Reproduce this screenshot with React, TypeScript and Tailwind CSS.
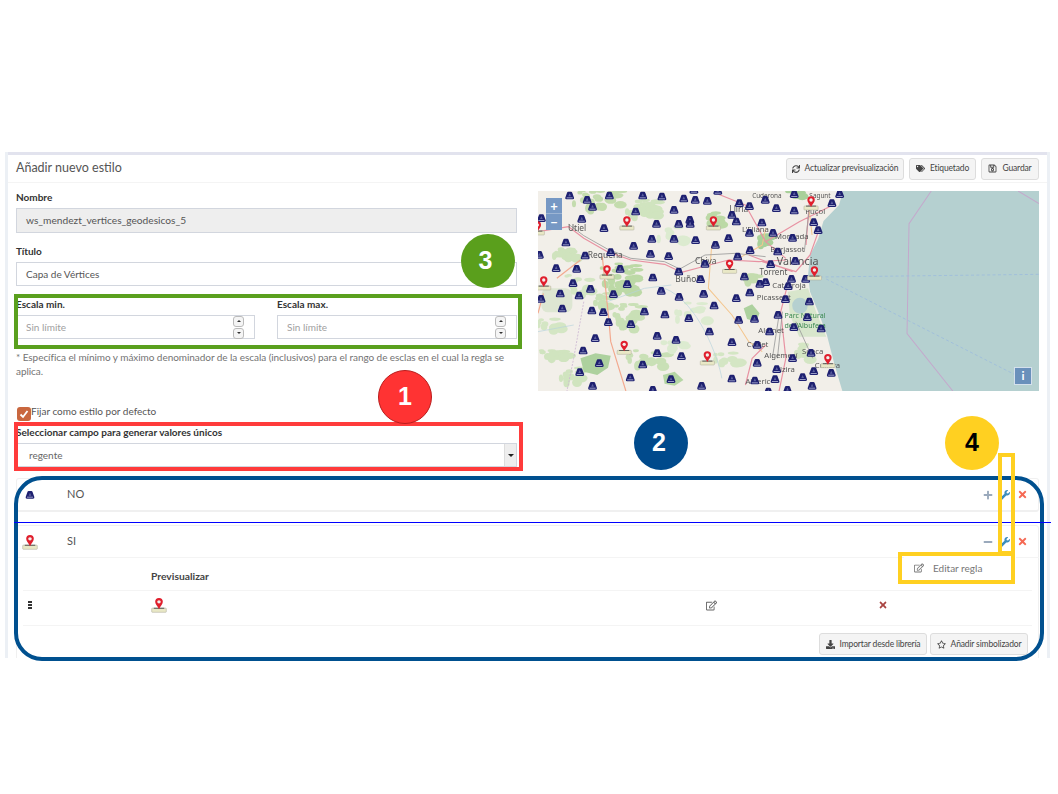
import { FaDownload, FaMinus, FaPlus, FaRegEdit, FaRegSave, FaRegStar, FaSync, FaTags, FaTimes, FaWrench } from "react-icons/fa";
import type { ReactNode } from "react";

const font = { fontFamily: "Lato, 'Noto Sans', sans-serif" };

// marker positions, in the map's own units (3 units = 1px)
const bluePoints = [
  [118, 152], [170, 165], [236, 152], [335, 152], [392, 155], [457, 161], [491, 165], [527, 168], [622, 175], [652, 184],
  [699, 165], [785, 148], [920, 148], [897, 175], [186, 186], [314, 200], [428, 195], [732, 190], [785, 197], [600, 210],
  [34, 220], [154, 222], [475, 225], [476, 237], [613, 230], [689, 233], [843, 232], [220, 250], [376, 237], [442, 237],
  [856, 256], [652, 264], [722, 264], [780, 279], [362, 282], [428, 282], [492, 286], [590, 280], [107, 293], [308, 303],
  [551, 300], [736, 320], [654, 316], [240, 322], [358, 327], [412, 334], [164, 332], [28, 330], [617, 335], [715, 358],
  [788, 348], [520, 357], [78, 370], [139, 372], [268, 372], [442, 380], [365, 398], [777, 402], [819, 402], [507, 403],
  [637, 395], [128, 415], [289, 418], [700, 412], [683, 417], [767, 424], [180, 432], [90, 446], [146, 452], [248, 448],
  [390, 438], [516, 447], [653, 443], [443, 456], [613, 460], [759, 463], [33, 462], [830, 470], [547, 482], [96, 491],
  [184, 497], [218, 502], [340, 500], [401, 509], [472, 520], [737, 510], [824, 517], [620, 525], [667, 522], [233, 532],
  [300, 538], [784, 547], [865, 551], [533, 560], [712, 560], [194, 580], [378, 573], [434, 585], [600, 592], [675, 600],
  [158, 617], [378, 625], [450, 634], [780, 640], [835, 624], [206, 655], [335, 659], [675, 654], [733, 673], [148, 682],
  [298, 698], [600, 701], [843, 679], [895, 684], [810, 697], [728, 703], [668, 707], [419, 703], [510, 723], [186, 723],
  [838, 723], [365, 735], [708, 740], [765, 735], [487, 135], [558, 138],
];

const redPoints = [
  [835, 175], [288, 235], [545, 235], [593, 365], [229, 382], [845, 385], [41, 415], [280, 608], [527, 640], [885, 648], [22, 250],
];

// wooded areas: cx, cy, rx, ry, how many patches, colour
const woods = [
  [205, 165, 75, 32, 30, "#c4dcae"], [335, 190, 50, 32, 24, "#d0e4bf"], [110, 322, 42, 20, 14, "#cfe3bd"],
  [265, 400, 55, 45, 34, "#bcd9a6"], [290, 515, 42, 40, 24, "#c9e0b6"], [215, 470, 25, 25, 12, "#c9e0b6"],
  [350, 640, 60, 25, 20, "#c9e0b6"], [70, 630, 50, 14, 16, "#d0e4bf"], [130, 690, 40, 24, 14, "#d0e4bf"],
  [545, 225, 25, 28, 10, "#bcd9a6"], [695, 285, 20, 20, 10, "#a9d09a"], [655, 400, 22, 12, 8, "#c4dcae"],
  [480, 500, 50, 30, 10, "#dcebd0"], [585, 640, 40, 20, 10, "#d4e6c4"], [790, 150, 28, 12, 10, "#a9d09a"],
  [810, 620, 25, 30, 10, "#d4e6c4"], [60, 540, 40, 18, 12, "#d4e6c4"], [420, 260, 40, 30, 8, "#dcebd0"],
  [150, 420, 50, 30, 12, "#d4e6c4"], [420, 600, 50, 20, 8, "#dcebd0"],
] as const;

const patches = woods.flatMap(([cx, cy, rx, ry, n, fill], w) =>
  Array.from({ length: n }, (_, i) => {
    const a = Math.sin(w * 12.9 + i * 78.2) * 43758.5;
    const b = Math.sin(w * 39.3 + i * 11.1) * 24634.6;
    const u = a - Math.floor(a);
    const v = b - Math.floor(b);
    return {
      cx: cx + (u * 2 - 1) * rx,
      cy: cy + (v * 2 - 1) * ry,
      rx: 6 + u * 14,
      ry: 4 + v * 10,
      fill,
    };
  })
);

const Blue = ({ x, y }: { x: number; y: number }) => (
  <g transform={`translate(${x} ${y})`}>
    <path d="M-4,-12 H4 Q7,-12 8,-8 L13,6 Q14,11 9,11 H-9 Q-14,11 -13,6 L-8,-8 Q-7,-12 -4,-12 Z" fill="#1e2070" />
    <path d="M0,-7 L4,2 H-4 Z" fill="#5c609f" />
    <rect x="-9" y="5" width="18" height="3" fill="#9a9dc6" />
  </g>
);

const Red = ({ x, y }: { x: number; y: number }) => (
  <g transform={`translate(${x} ${y})`}>
    <rect x="-21" y="8" width="42" height="12" rx="2" fill="#e9e8c6" stroke="#aaa996" strokeWidth="1.5" />
    <rect x="-15" y="7" width="30" height="2.5" fill="#444" />
    <path d="M0,11 C-4,2 -11,-3 -11,-10 A11,11 0 0 1 11,-10 C11,-3 4,2 0,11 Z" fill="#e01f2d" />
    <circle cx="0" cy="-10" r="5" fill="#f1f1ef" />
  </g>
);

const BlueIcon = () => (
  <svg width="10" height="10" viewBox="-15 -13 30 26">
    <Blue x={0} y={0} />
  </svg>
);

const RedIcon = () => (
  <svg width="16" height="16" viewBox="-23 -23 46 44">
    <Red x={0} y={0} />
  </svg>
);

const MapLabel = ({ x, y, size = 25, fill = "#555", children }: { x: number; y: number; size?: number; fill?: string; children: ReactNode }) => (
  <text x={x} y={y} fontSize={size} fill={fill} fontFamily="'Noto Sans', sans-serif">{children}</text>
);

const MapPreview = () => (
  <div className="relative w-[501px] h-[200px] mt-2 overflow-hidden">
    <svg width="501" height="200" viewBox="24 138 1488 600" preserveAspectRatio="none" className="block blur-[0.3px]">
      <rect x="0" y="100" width="1600" height="700" fill="#f2efe9" />
      <rect x="34" y="430" width="92" height="72" rx="20" fill="#dde6d2" />
      {patches.map((p, i) => (
        <ellipse key={i} cx={p.cx} cy={p.cy} rx={p.rx} ry={p.ry} fill={p.fill} />
      ))}
      <path d="M150,640 L195,625 L240,632 L232,668 L200,690 L160,680 Z" fill="#add19e" />
      <path d="M635,490 L660,478 L682,505 L672,530 L645,522 Z" fill="#add19e" />
      <path d="M395,690 L430,680 L456,705 L430,722 L400,716 Z" fill="#b5d6a4" />
      <path d="M766,440 L826,430 L850,500 L880,575 L800,575 L772,510 Z" fill="#d8e6cc" />
      <ellipse cx="802" cy="482" rx="23" ry="24" fill="#b5d0d0" />
      <path d="M932,130 L918,180 L872,228 L856,282 L832,330 L826,392 L832,440 L856,500 L882,570 L905,660 L930,745 H1600 V130 Z" fill="#b5d0d0" />
      <path d="M1192,138 L1126,236 L1120,566 L1256,738 M1450,138 L1512,176" fill="none" stroke="#c4a8cc" strokeWidth="3" />
      <path d="M862,396 L1512,388 M880,402 L1462,700" fill="none" stroke="#9dbcdc" strokeWidth="2.5" strokeDasharray="9 7" />
      <g fill="none" strokeLinejoin="round">
        <path d="M540,300 L530,430 L600,510 L650,590 L690,620 M830,200 L838,270 M700,250 L690,300 L620,340" stroke="#f4c68e" strokeWidth="3" />
        <path d="M215,335 L235,530 L240,590 L285,738 M24,505 L40,445 M150,345 L80,400" stroke="#f2a98f" strokeWidth="3.5" />
        <path d="M160,470 L130,640 L110,738" stroke="#cdb7d3" strokeWidth="2.5" strokeDasharray="6 4" />
        <path d="M24,260 L115,245 L160,280 L230,320 L300,345 L400,358 L450,382 L510,366 L590,345 L680,350 L760,345 M560,148 L640,180 L700,290 L760,340 M860,250 L832,330 L790,380 L690,350 M770,400 L745,500 L760,640 L740,738 M700,600 L660,640 L640,720 M780,380 L650,330 M700,290 L800,230 L900,180 M830,170 L820,300" stroke="#e892a2" strokeWidth="3.5" />
        <path d="M115,238 L160,272 L230,312 L300,340 L400,350 L445,372 L520,330 L610,325 L700,335 M740,510 L720,640 M750,500 L735,640 M830,190 L815,320 M790,530 L840,640" stroke="#9a9a9a" strokeWidth="2.5" />
      </g>
      <path d="M400,430 C500,470 560,640 570,700 M24,560 L130,540 M230,470 L340,430 L420,420" fill="none" stroke="#b7d3dc" strokeWidth="2" />
      <MapLabel x={113} y={258}>Utiel</MapLabel>
      <MapLabel x={172} y={340}>Requena</MapLabel>
      <MapLabel x={490} y={357}>Chiva</MapLabel>
      <MapLabel x={432} y={410}>Buñol</MapLabel>
      <MapLabel x={592} y={200}>Llíria</MapLabel>
      <MapLabel x={630} y={262} size={23}>L'Eliana</MapLabel>
      <MapLabel x={728} y={282} size={23}>Moncada</MapLabel>
      <MapLabel x={714} y={320} size={23}>Burjassot</MapLabel>
      <MapLabel x={733} y={360} size={32}>Valencia</MapLabel>
      <MapLabel x={682} y={390} size={24}>Torrent</MapLabel>
      <MapLabel x={720} y={430} size={23}>Catarroja</MapLabel>
      <MapLabel x={674} y={465} size={23}>Picassent</MapLabel>
      <MapLabel x={818} y={206} size={23}>Puçol</MapLabel>
      <MapLabel x={660} y={158} size={19}>Cuderona</MapLabel>
      <MapLabel x={830} y={158} size={19}>Sagunt</MapLabel>
      <MapLabel x={756} y={520} size={21} fill="#3d8a52">Parc Natural</MapLabel>
      <MapLabel x={756} y={550} size={21} fill="#3d8a52">de l'Albufera</MapLabel>
      <MapLabel x={678} y={564} size={23}>Alginet</MapLabel>
      <MapLabel x={644} y={606} size={23}>Carlet</MapLabel>
      <MapLabel x={696} y={640} size={23}>Algemesí</MapLabel>
      <MapLabel x={808} y={628} size={23}>Sueca</MapLabel>
      <MapLabel x={846} y={668} size={23}>Cullera</MapLabel>
      <MapLabel x={728} y={680} size={23}>Alzira</MapLabel>
      <MapLabel x={640} y={716} size={23}>Alberic</MapLabel>
      {bluePoints.map(([x, y], i) => <Blue key={i} x={x} y={y} />)}
      {redPoints.map(([x, y], i) => <Red key={i} x={x} y={y} />)}
    </svg>
    <div className="absolute left-2 top-[7px] w-4 flex flex-col text-white font-bold text-[13px] leading-4 text-center">
      <div className="h-4 bg-[#7698c4] border-b border-[#9db5d4]">+</div>
      <div className="h-4 bg-[#7698c4]">−</div>
    </div>
    <div className="absolute right-[7px] bottom-[6px] w-[18px] h-[18px] bg-[#6a90bb] border border-[#d4e0ec] text-white font-bold text-xs leading-4 text-center">i</div>
  </div>
);

const Btn = ({ icon, children, className = "" }: { icon: ReactNode; children: ReactNode; className?: string }) => (
  <div className={`h-[22px] flex items-center justify-center gap-[5px] bg-[#f4f4f4] border border-[#ddd] rounded-[3px] text-[8.5px] tracking-[-0.15px] whitespace-nowrap text-[#444] ${className}`}>
    {icon}
    <span>{children}</span>
  </div>
);

const Label = ({ children }: { children: ReactNode }) => (
  <div className="h-[14px] text-[10px] leading-[14px] font-bold text-[#333]">{children}</div>
);

const Spinner = () => (
  <div className="flex flex-col gap-[1px]">
    <div className="w-[11px] h-[11px] border border-[#bbb] rounded-[3px] bg-[#f5f5f5] flex items-center justify-center">
      <div className="border-x-[2px] border-b-[2px] border-x-transparent border-b-[#333]" />
    </div>
    <div className="w-[11px] h-[11px] border border-[#bbb] rounded-[3px] bg-[#f5f5f5] flex items-center justify-center">
      <div className="border-x-[2px] border-t-[2px] border-x-transparent border-t-[#333]" />
    </div>
  </div>
);

const ScaleField = ({ label, className }: { label: string; className: string }) => (
  <div className={className}>
    <Label>{label}</Label>
    <div className="mt-1 h-6 border border-[#d2d6de] flex items-center justify-between pl-[9px] pr-[10px] text-[10px] text-[#a0a0a0]">
      <span>Sin límite</span>
      <Spinner />
    </div>
  </div>
);

const RuleHead = ({ symbol, name, open }: { symbol: ReactNode; name: string; open?: boolean }) => (
  <div className="h-[31px] flex items-center pl-[5px] pr-[10px]">
    <div className="w-[16px] mr-[29px] flex justify-center">{symbol}</div>
    <span className="text-[11px] text-[#555] flex-1">{name}</span>
    <div className="flex items-center gap-[7px]">
      {open ? <FaMinus size={10} color="#9aa9bc" /> : <FaPlus size={10} color="#9aa9bc" />}
      <FaWrench size={10} color="#3c8dbc" />
      <FaTimes size={11} color="#f56954" />
    </div>
  </div>
);

const Handle = () => (
  <div className="flex flex-col gap-[1px]">
    <div className="w-1 h-[2px] bg-[#333]" />
    <div className="w-1 h-[2px] bg-[#333]" />
    <div className="w-1 h-[2px] bg-[#333]" />
  </div>
);

export default function App() {
  return (
    <div className="relative w-[1058px] h-[794px] bg-white overflow-hidden pt-[152px] pl-[5px]" style={font}>
      <div className="w-[1045px] h-[506px] bg-[#ecf0f5] px-[3px] overflow-hidden">
        <div className="h-full bg-white border-t-[3px] border-[#e2e3ee] text-[#444]">
          <div className="h-[28px] border-b border-[#f4f4f4] flex items-center pl-2 pr-2">
            <h3 className="text-[12.5px] text-[#555] flex-1">Añadir nuevo estilo</h3>
            <div className="flex gap-[5px]">
              <Btn icon={<FaSync size={8} />} className="w-[118px]">Actualizar previsualización</Btn>
              <Btn icon={<FaTags size={9} />} className="w-[67px]">Etiquetado</Btn>
              <Btn icon={<FaRegSave size={9} />} className="w-[58px]">Guardar</Btn>
            </div>
          </div>

          <div className="flex gap-[21px] pl-2 pr-2">
            <div className="w-[501px] pt-[7px]">
              <Label>Nombre</Label>
              <div className="mt-1 h-[25px] bg-[#eee] border border-[#d2d6de] flex items-center pl-[9px] text-[10.2px] text-[#555]">ws_mendezt_vertices_geodesicos_5</div>

              <div className="mt-[11px]"><Label>Título</Label></div>
              <div className="mt-1 h-6 border border-[#d2d6de] flex items-center pl-[9px] text-[10px] text-[#555]">Capa de Vértices</div>

              <div className="mt-[11px] flex gap-[22px]">
                <ScaleField label="Escala min." className="w-[239px]" />
                <ScaleField label="Escala max." className="w-[240px]" />
              </div>

              <p className="mt-[11px] text-[10px] leading-[14px] tracking-[-0.055px] text-[#737373]">* Específica el mínimo y máximo denominador de la escala (inclusivos) para el rango de esclas en el cual la regla se aplica.</p>

              <div className="mt-[26px] relative h-[14px] pl-[15px] text-[10px] leading-[14px] text-[#555]">
                <div className="absolute left-[1px] top-[3px] w-[14px] h-[14px] bg-[#c9673f] rounded-[3px] flex items-center justify-center">
                  <svg width="10" height="10" viewBox="0 0 10 10"><path d="M1.5,5.5 L4,8 L8.5,2" fill="none" stroke="#fff" strokeWidth="1.8" /></svg>
                </div>
                Fijar como estilo por defecto
              </div>

              <div className="mt-[7px]"><Label>Seleccionar campo para generar valores únicos</Label></div>
              <div className="mt-1 h-6 ml-[1px] border border-[#d2d6de] flex items-center justify-between pl-[11px] text-[10px] text-[#666]">
                <span>regente</span>
                <div className="w-[12px] h-full bg-[#eee] border-l border-[#ddd] flex items-center justify-center">
                  <div className="border-x-[3px] border-t-[3px] border-x-transparent border-t-[#222]" />
                </div>
              </div>
            </div>
            <MapPreview />
          </div>

          <div className="mt-[11px] ml-2 mr-2">
            <div className="h-[34px] border border-[#f0f0f0] border-b-2 rounded-[3px]">
              <RuleHead symbol={<BlueIcon />} name="NO" />
            </div>

            <div className="relative mt-[13px] h-[200px] border border-[#f0f0f0] rounded-[3px]">
              <RuleHead symbol={<RedIcon />} name="SI" open />
              <div className="border-t border-[#f4f4f4] mx-[-1px]" />
              <div className="mx-[6px]">
                <div className="h-[33px] flex items-end pb-[6px] pl-[128px] text-[10.3px] font-bold text-[#444] border-b border-[#f4f4f4]">Previsualizar</div>
                <div className="h-[35px] pb-[6px] flex items-center border-b border-[#f4f4f4]">
                  <div className="w-[128px] pl-[5px]"><Handle /></div>
                  <div className="w-[555px]"><RedIcon /></div>
                  <div className="w-[172px]"><FaRegEdit size={11} color="#666" /></div>
                  <FaTimes size={10} color="#a94442" />
                </div>
              </div>
              <div className="flex justify-end gap-[3px] mt-[7px] mr-[10px]">
                <Btn icon={<FaDownload size={9} />} className="w-[108px]">Importar desde librería</Btn>
                <Btn icon={<FaRegStar size={9} />} className="w-[98px]">Añadir simbolizador</Btn>
              </div>

              <div className="absolute right-[22px] top-[29px] w-[112px] h-[26px] bg-white flex items-center pl-[10px] gap-[9px] text-[10px] text-[#777]">
                <FaRegEdit size={10} color="#777" />
                Editar regla
              </div>
            </div>
          </div>
        </div>
      </div>

      {/* annotations over the screenshot */}
      <div className="absolute left-[14px] top-[294px] w-[508px] h-[55px] border-4 border-[#5aa01e]" />
      <div className="absolute left-[14px] top-[422px] w-[509px] h-[49px] border-4 border-[#ff3b3b]" />
      <div className="absolute left-[14px] top-[476px] w-[1030px] h-[185px] border-4 border-[#00508f] rounded-[28px]" />
      <div className="absolute left-[14px] top-[522px] w-[1037px] h-px bg-[#0000ff]" />
      <div className="absolute left-[998px] top-[453px] w-[17px] h-[102px] border-4 border-[#ffd021]" />
      <div className="absolute left-[898px] top-[552px] w-[117px] h-[32px] border-4 border-[#ffd021]" />
      <Circle x={461} y={234} color="bg-[#5a9f1c] pr-[5px]" text="text-white">3</Circle>
      <Circle x={378} y={370} color="bg-[#ff3333] border border-[#b91c1c]" text="text-white">1</Circle>
      <Circle x={634} y={416} color="bg-[#004a8c] pr-[4px]" text="text-white">2</Circle>
      <Circle x={945} y={416} color="bg-[#ffd021]" text="text-black">4</Circle>
    </div>
  );
}

function Circle({ x, y, color, text, children }: { x: number; y: number; color: string; text: string; children: ReactNode }) {
  return (
    <div
      className={`absolute w-[54px] h-[54px] rounded-full flex items-center justify-center text-[25px] font-bold ${color} ${text}`}
      style={{ left: x, top: y, fontFamily: "'Liberation Sans', sans-serif" }}
    >
      {children}
    </div>
  );
}
